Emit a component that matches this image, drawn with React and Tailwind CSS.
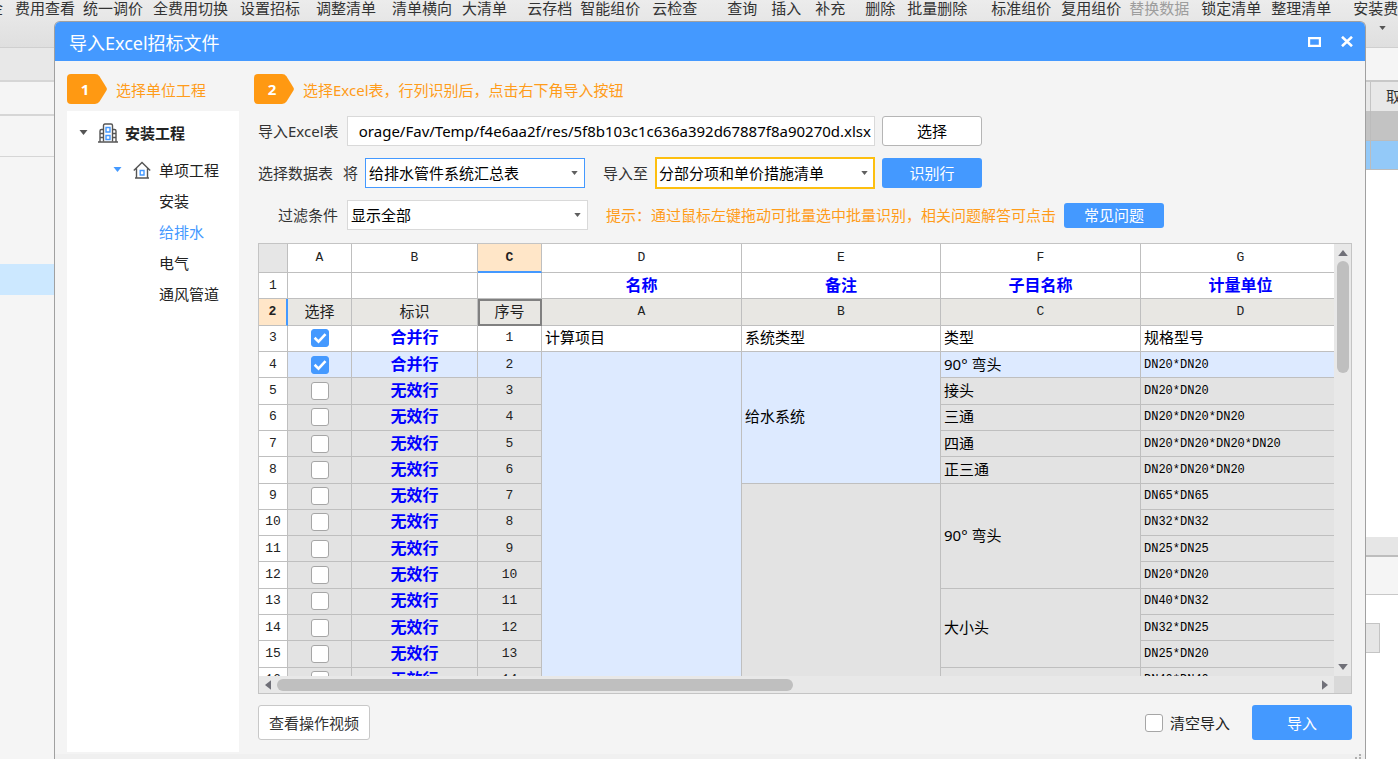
import React, { useState } from 'react';

const toolbarItems = [
  { label: '金', gap: '-ml-3' },
  { label: '费用查看', gap: 'ml-3' },
  { label: '统一调价', gap: 'ml-2' },
  { label: '全费用切换', gap: 'ml-2.5' },
  { label: '设置招标', gap: 'ml-3' },
  { label: '调整清单', gap: 'ml-4' },
  { label: '清单横向', gap: 'ml-4' },
  { label: '大清单', gap: 'ml-2.5' },
  { label: '云存档', gap: 'ml-5' },
  { label: '智能组价', gap: 'ml-2' },
  { label: '云检查', gap: 'ml-3' },
  { label: '查询', gap: 'ml-[30px]' },
  { label: '插入', gap: 'ml-3.5' },
  { label: '补充', gap: 'ml-3.5' },
  { label: '删除', gap: 'ml-5' },
  { label: '批量删除', gap: 'ml-3' },
  { label: '标准组价', gap: 'ml-6' },
  { label: '复用组价', gap: 'ml-2.5' },
  { label: '替换数据', gap: 'ml-2', disabled: true },
  { label: '锁定清单', gap: 'ml-3' },
  { label: '整理清单', gap: 'ml-2.5' },
  { label: '安装费', gap: 'ml-[22px]' },
];

const columns = ['A', 'B', 'C', 'D', 'E', 'F', 'G'];

const sheetRows = [
  { no: 4, type: '合并行', spec: 'DN20*DN20', d: { span: 13 }, e: { text: '给水系统', span: 5 }, f: { text: '90° 弯头', span: 1 } },
  { no: 5, type: '无效行', spec: 'DN20*DN20', f: { text: '接头', span: 1 } },
  { no: 6, type: '无效行', spec: 'DN20*DN20*DN20', f: { text: '三通', span: 1 } },
  { no: 7, type: '无效行', spec: 'DN20*DN20*DN20*DN20', f: { text: '四通', span: 1 } },
  { no: 8, type: '无效行', spec: 'DN20*DN20*DN20', f: { text: '正三通', span: 1 } },
  { no: 9, type: '无效行', spec: 'DN65*DN65', e: { text: '', span: 8 }, f: { text: '90° 弯头', span: 4 } },
  { no: 10, type: '无效行', spec: 'DN32*DN32' },
  { no: 11, type: '无效行', spec: 'DN25*DN25' },
  { no: 12, type: '无效行', spec: 'DN20*DN20' },
  { no: 13, type: '无效行', spec: 'DN40*DN32', f: { text: '大小头', span: 3 } },
  { no: 14, type: '无效行', spec: 'DN32*DN25' },
  { no: 15, type: '无效行', spec: 'DN25*DN20' },
  { no: 16, type: '无效行', spec: 'DN40*DN40', f: { text: '', span: 1 } },
];

const cell = 'border-r border-b border-[#bfbfbf] p-0 overflow-hidden whitespace-nowrap';
const textCell = `${cell} pb-0.5`;
const blueCell = `${textCell} text-base leading-5 font-bold text-[#0000ff]`;
const mono = "font-['Liberation_Mono','Noto_Sans_CJK_SC',monospace]";

const Caret = ({ className }) => (
  <svg viewBox="0 0 8 5" className={className} fill="currentColor">
    <path d="M0 0h8L4 5z" />
  </svg>
);

const Checkbox = ({ id, label, checked, onChange }) => (
  <span className="grid place-items-center">
    <input
      id={id}
      type="checkbox"
      aria-label={label}
      checked={checked}
      onChange={onChange}
      className="[grid-area:1/1] appearance-none w-[18px] h-[18px] rounded-[3px] border border-[#a6a6a6] bg-white checked:bg-[#4499ff] checked:border-[#4499ff]"
    />
    {checked && (
      <svg viewBox="0 0 18 18" className="[grid-area:1/1] w-[18px] h-[18px] pointer-events-none" fill="none" stroke="#fff" strokeWidth="2.6">
        <path d="M3.600 8.800l3.900 3.800 7-7.400" />
      </svg>
    )}
  </span>
);

const SelectBox = ({ id, options, className }) => (
  <div className="relative shrink-0">
    <select id={id} className={`block appearance-none bg-white text-black pr-6 outline-none ${className}`}>
      {options.map((option) => (
        <option key={option}>{option}</option>
      ))}
    </select>
    <Caret className="absolute right-[7px] top-1/2 -mt-0.5 w-[7px] h-1 text-[#5f5f5f] pointer-events-none" />
  </div>
);

const StepTag = ({ number, children }) => (
  <div className="flex items-center gap-[9px] h-[30px] text-[#ff9c1a] whitespace-nowrap">
    <div className="relative w-10 h-[30px] shrink-0">
      <svg viewBox="0 0 40 30" className="w-10 h-[30px]" fill="#ff9912">
        <path d="M4 0h24q3 0 4.600 2.400L39.400 13.400q.9 1.600 0 3.200L32.600 27.600Q31 30 28 30H4q-4 0-4-4V4q0-4 4-4z" />
      </svg>
      <span className="absolute inset-y-0 left-0 w-9 flex items-center justify-center text-white font-bold">{number}</span>
    </div>
    <span className="pt-0.5">{children}</span>
  </div>
);

const BuildingIcon = () => (
  <svg viewBox="0 0 20 20" className="w-5 h-5" fill="none" stroke="#555" strokeWidth="1.4">
    <path d="M5.500 18.500V2.500q0-1.500 1.500-1.500h6q1.500 0 1.500 1.500v16" />
    <path d="M5.500 6.500H3.500q-1.500 0-1.500 1.500v10.500M14.500 6.500h2q1.500 0 1.500 1.500v10.500M0 19h20M2 10.500h3.500M2 14.500h3.500M14.500 10.500H18M14.500 14.500H18" />
    <path d="M8 4.500h4v4.500H8zM8 12.500h4v4H8z" stroke="#4499ff" />
  </svg>
);

const HouseIcon = () => (
  <svg viewBox="0 0 18 18" className="w-[18px] h-[18px]" fill="none" stroke="#555" strokeWidth="1.4">
    <path d="M.8 9.500L9 1.500l8.200 8M3.500 7.500v9.500M14.500 7.500v9.500M2 17h14" />
    <path d="M7.200 9.500h3.800v4.500H7.200z" stroke="#4499ff" />
  </svg>
);

const Backdrop = () => (
  <div className="flex flex-col h-full">
    <div className="h-12 shrink-0 bg-linear-to-b from-[#ececec] to-[#dfdfdf] border-b border-[#cfcfcf] overflow-hidden">
      <div className="flex h-4 items-center text-[#333] whitespace-nowrap">
        {toolbarItems.map((item) => (
          <button
            key={item.label}
            disabled={item.disabled}
            className={`shrink-0 leading-4 disabled:text-[#9d9d9d] ${item.gap}`}
          >
            {item.label}
          </button>
        ))}
      </div>
      <div className="flex justify-end pt-2.5 pr-3">
        <Caret className="w-[7px] h-1 text-[#555]" />
      </div>
    </div>
    <div className="flex flex-1 justify-between">
      <div className="w-[60px] bg-[#f5f5f5]">
        <div className="h-[34px] bg-[#e8e8e8] border-b-2 border-[#d6d6d6]" />
        <div className="h-[34px] border-b-2 border-[#d6d6d6]" />
        <div className="h-[41px] border-b border-[#d6d6d6]" />
        <div className="h-[107px]" />
        <div className="h-[31px] bg-[#cce8ff]" />
      </div>
      <div className="w-10 bg-white text-[#333]">
        <div className="h-[34px] bg-[#f5f5f5] border-b-2 border-[#c8c8c8]" />
        <div className="h-[29px] flex bg-[#e8e8e8] pl-3">
          <div className="flex-1 border-l border-[#c4c4c4] pl-[15px] overflow-hidden whitespace-nowrap leading-7">取</div>
        </div>
        <div className="h-[30px] bg-[#c3c3c3] border-b border-[#bcbcbc] pl-3">
          <div className="h-full border-l border-[#bcbcbc]" />
        </div>
        <div className="h-[29px] bg-[#93c9f8] border-b border-[#bcbcbc] pl-3">
          <div className="h-full border-l border-[#bcbcbc]" />
        </div>
        <div className="h-[367px]" />
        <div className="h-5 bg-[#e6e6e6] border-b-2 border-[#bdbdbd]" />
        <div className="h-[38px] bg-[#f5f5f5] border-b border-[#c8c8c8]" />
        <div className="mt-7 mr-[18px] h-[30px] bg-[#e6e6e6] border border-[#c4c4c4]" />
      </div>
    </div>
  </div>
);

const ProjectTree = () => {
  const [selected, setSelected] = useState('给排水');

  return (
    <nav className="flex-1 mt-[7px] pt-1.5 bg-white text-[#222]">
      <div className="flex items-center h-[31px] mb-1.5 pl-3 font-bold">
        <Caret className="w-[9px] h-[5px] mr-[10px] text-[#555]" />
        <BuildingIcon />
        <button className="ml-[7px]">安装工程</button>
      </div>
      <div className="flex items-center h-[31px] pl-[46px]">
        <Caret className="w-[9px] h-[5px] mr-[11px] text-[#4499ff]" />
        <HouseIcon />
        <button className="ml-2">单项工程</button>
      </div>
      <ul className="pl-[92px]">
        {['安装', '给排水', '电气', '通风管道'].map((name) => (
          <li key={name} className="flex items-center h-[31px]">
            <button
              onClick={() => setSelected(name)}
              className={selected === name ? 'text-[#4499ff]' : ''}
            >
              {name}
            </button>
          </li>
        ))}
      </ul>
    </nav>
  );
};

const Sheet = () => {
  const [checked, setChecked] = useState({ 3: true, 4: true });
  const toggle = (no) => setChecked({ ...checked, [no]: !checked[no] });

  return (
    <div className="flex-1 min-h-0 mt-[13px] flex flex-col border border-[#c4c4c4] bg-[#e8e8e8]">
      <div className="flex flex-1 min-h-0">
        <div className="flex-1 min-w-0 overflow-hidden">
          <table className="table-fixed w-full min-w-[1082px] h-[450px] border-separate border-spacing-0 text-center text-[#222]">
            <colgroup>
              <col className="w-[29px]" />
              <col className="w-16" />
              <col className="w-[126px]" />
              <col className="w-16" />
              <col className="w-[200px]" />
              <col className="w-[199px]" />
              <col className="w-[200px]" />
              <col />
            </colgroup>
            <thead>
              <tr className={`h-[29px] text-[13px] ${mono}`}>
                <th className={`${cell} bg-[#e6e6e6]`} />
                {columns.map((name) => (
                  <th
                    key={name}
                    className={`${cell} ${name === 'C' ? 'bg-[#ffe6c8] border-b-2 border-b-[#4499ff] font-bold' : 'bg-white font-normal'}`}
                  >
                    {name}
                  </th>
                ))}
              </tr>
            </thead>
            <tbody>
              <tr className="h-[26px] bg-white">
                <th className={`${cell} ${mono} text-[13px] font-normal`}>1</th>
                <td className={cell} />
                <td className={cell} />
                <td className={cell} />
                {['名称', '备注', '子目名称', '计量单位'].map((name) => (
                  <td key={name} className={blueCell}>{name}</td>
                ))}
              </tr>
              <tr className="h-[26px] bg-[#e8e7e3]">
                <th className={`${cell} ${mono} text-[13px] font-bold bg-[#ffe6c8] border-r-2 border-r-[#4499ff]`}>2</th>
                <td className={textCell}>选择</td>
                <td className={textCell}>标识</td>
                <td className={`${textCell} outline-2 -outline-offset-2 outline-[#808080]`}>序号</td>
                {['A', 'B', 'C', 'D'].map((name) => (
                  <td key={name} className={`${cell} ${mono} text-[13px]`}>{name}</td>
                ))}
              </tr>
              <tr className="h-[26px] bg-white">
                <th className={`${cell} ${mono} text-[13px] font-normal`}>3</th>
                <td className={cell}>
                  <Checkbox label="选择 3" checked={!!checked[3]} onChange={() => toggle(3)} />
                </td>
                <td className={blueCell}>合并行</td>
                <td className={`${cell} ${mono} text-[13px]`}>1</td>
                {['计算项目', '系统类型', '类型', '规格型号'].map((name) => (
                  <td key={name} className={`${textCell} pl-[3px] text-left text-black`}>{name}</td>
                ))}
              </tr>
              {sheetRows.map((row) => (
                <tr key={row.no} className={`h-[26px] ${row.no === 4 ? 'bg-[#ddeaff]' : 'bg-[#e3e3e3]'}`}>
                  <th className={`${cell} ${mono} text-[13px] font-normal bg-white`}>{row.no}</th>
                  <td className={cell}>
                    <Checkbox label={`选择 ${row.no}`} checked={!!checked[row.no]} onChange={() => toggle(row.no)} />
                  </td>
                  <td className={blueCell}>{row.type}</td>
                  <td className={`${cell} ${mono} text-[13px]`}>{row.no - 2}</td>
                  {row.d && <td rowSpan={row.d.span} className={cell} />}
                  {row.e && (
                    <td rowSpan={row.e.span} className={`${textCell} pl-[3px] text-left text-black`}>{row.e.text}</td>
                  )}
                  {row.f && (
                    <td rowSpan={row.f.span} className={`${textCell} pl-[3px] text-left text-black`}>{row.f.text}</td>
                  )}
                  <td className={`${cell} ${mono} pl-[3px] text-left text-xs text-black`}>{row.spec}</td>
                </tr>
              ))}
            </tbody>
          </table>
        </div>
        <div className="w-[17px] shrink-0 flex flex-col items-center bg-[#e8e8e8] text-[#707078]">
          <Caret className="w-[10px] h-[6px] mt-1.5 mb-[5px] rotate-180" />
          <div className="w-3 h-[26%] rounded-full bg-[#bfbfbf]" />
          <Caret className="w-[10px] h-[6px] mt-auto mb-1.5" />
        </div>
      </div>
      <div className="flex h-[17px] shrink-0 text-[#707078]">
        <div className="flex flex-1 items-center">
          <Caret className="w-[10px] h-[6px] ml-1 mr-1 rotate-90" />
          <div className="w-[48%] h-3 rounded-full bg-[#bfbfbf]" />
          <Caret className="w-[10px] h-[6px] ml-auto mr-1 -rotate-90" />
        </div>
        <div className="w-[17px] bg-[#d9d9d9]" />
      </div>
    </div>
  );
};

const ImportForm = () => {
  const [path, setPath] = useState('orage/Fav/Temp/f4e6aa2f/res/5f8b103c1c636a392d67887f8a90270d.xlsx');

  return (
    <div className="mt-3 flex flex-col gap-3 text-[#333] whitespace-nowrap">
      <div className="flex items-center h-[30px]">
        <label htmlFor="path" className="w-[89px] shrink-0">导入Excel表</label>
        <input
          id="path"
          value={path}
          onChange={(e) => setPath(e.target.value)}
          className="w-[528px] h-[30px] px-[3px] bg-white border border-[#d9d9d9] text-black text-right outline-none"
        />
        <button className="ml-[7px] w-[100px] h-[30px] rounded-[3px] bg-white border border-[#b5b5b5] text-black">选择</button>
      </div>
      <div className="flex items-center h-[30px]">
        <label htmlFor="source" className="w-[85px] shrink-0">选择数据表</label>
        <span className="w-[22px]">将</span>
        <SelectBox
          id="source"
          options={['给排水管件系统汇总表']}
          className="w-[220px] h-[30px] pl-[3px] border border-[#4499ff]"
        />
        <label htmlFor="target" className="ml-[18px] w-[52px] shrink-0">导入至</label>
        <SelectBox
          id="target"
          options={['分部分项和单价措施清单']}
          className="w-[220px] h-8 pl-0.5 border-2 border-[#fdbf0f]"
        />
        <button className="ml-[7px] w-[100px] h-[30px] rounded-[3px] bg-[#4499ff] text-white">识别行</button>
      </div>
      <div className="flex items-center h-[30px]">
        <label htmlFor="filter" className="w-[89px] pl-5 shrink-0">过滤条件</label>
        <SelectBox
          id="filter"
          options={['显示全部']}
          className="w-[241px] h-[30px] pl-[3px] border border-[#d9d9d9]"
        />
        <span className="ml-[18px] text-[#ff9c1a]">提示：通过鼠标左键拖动可批量选中批量识别，相关问题解答可点击</span>
        <button className="ml-2 w-[100px] h-[25px] rounded-[3px] bg-[#4499ff] text-white">常见问题</button>
      </div>
    </div>
  );
};

const ImportDialog = () => {
  const [clearFirst, setClearFirst] = useState(false);

  return (
    <div
      role="dialog"
      aria-label="导入Excel招标文件"
      className="absolute left-[54px] right-8 top-[21px] bottom-0 flex flex-col bg-[#f4f4f4] border border-b-0 border-[#a0a0a0] rounded-t-md overflow-hidden"
    >
      <div className="flex items-center h-[39px] shrink-0 pl-3.5 pr-3 bg-[#4499ff] text-white">
        <h1 className="flex-1 pt-0.5 text-lg leading-6">导入Excel招标文件</h1>
        <button aria-label="最大化" className="mr-5">
          <svg viewBox="0 0 13 10" className="w-[13px] h-[10px]" fill="none" stroke="#fff" strokeWidth="2.200">
            <path d="M1.100 1.100h10.800v7.800H1.100z" />
          </svg>
        </button>
        <button aria-label="关闭">
          <svg viewBox="0 0 12 11" className="w-3 h-[11px]" fill="none" stroke="#fff" strokeWidth="2.600">
            <path d="M1 .8l10 9.400M11 .8L1 10.200" />
          </svg>
        </button>
      </div>

      <div className="flex flex-1 min-h-0 pt-[13px] pl-3 pr-[13px]">
        <aside className="w-[172px] shrink-0 mr-[15px] pb-0.5 flex flex-col">
          <StepTag number="1">选择单位工程</StepTag>
          <ProjectTree />
        </aside>

        <main className="flex-1 min-w-0 pb-3.5 flex flex-col">
          <StepTag number="2">选择Excel表，行列识别后，点击右下角导入按钮</StepTag>
          <div className="flex-1 min-h-0 pl-1 flex flex-col">
            <ImportForm />
            <Sheet />
            <div className="flex items-center mt-[11px] text-[#222]">
              <button className="w-28 h-[35px] rounded-[3px] bg-white border border-[#c8c8c8] text-[#333]">查看操作视频</button>
              <div className="ml-auto flex items-center gap-[7px]">
                <Checkbox id="clear" checked={clearFirst} onChange={() => setClearFirst(!clearFirst)} />
                <label htmlFor="clear">清空导入</label>
              </div>
              <button className="ml-[22px] w-[100px] h-[35px] rounded-[3px] bg-[#4499ff] text-white">导入</button>
            </div>
          </div>
        </main>
      </div>

      <div className="flex justify-end items-end h-[5px] shrink-0 pr-1 bg-[#f0f0f0]">
        <svg viewBox="0 0 8 5" className="w-2 h-[5px]" fill="#b0b0b0">
          <path d="M6 0h2v2H6zM6 3h2v2H6zM2 3h2v2H2z" />
        </svg>
      </div>
    </div>
  );
};

const App = () => (
  <div className="relative h-screen overflow-hidden bg-[#f5f5f5] text-[15px] leading-5 font-['Noto_Sans','Noto_Sans_CJK_SC',sans-serif]">
    <Backdrop />
    <ImportDialog />
  </div>
);

export default App;
